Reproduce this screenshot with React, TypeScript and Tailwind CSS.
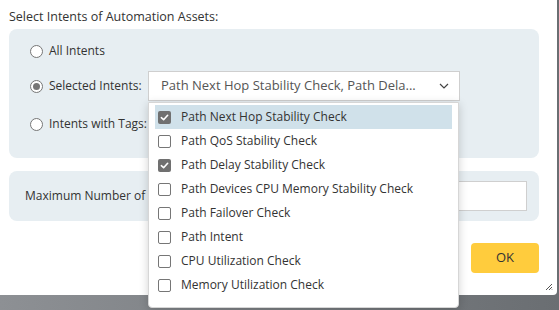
const intents = [
  { label: "Path Next Hop Stability Check", checked: true, active: true },
  { label: "Path QoS Stability Check", checked: false },
  { label: "Path Delay Stability Check", checked: true },
  { label: "Path Devices CPU Memory Stability Check", checked: false },
  { label: "Path Failover Check", checked: false },
  { label: "Path Intent", checked: false },
  { label: "CPU Utilization Check", checked: false },
  { label: "Memory Utilization Check", checked: false },
];

function Radio({ checked = false }: { checked?: boolean }) {
  return (
    <span className="w-[13px] h-[13px] rounded-full border border-[#767676] bg-white flex items-center justify-center shrink-0">
      {checked && <span className="w-[7px] h-[7px] rounded-full bg-[#767676]" />}
    </span>
  );
}

function Checkbox({ checked = false }: { checked?: boolean }) {
  if (checked) {
    return (
      <span className="w-[13px] h-[13px] rounded-[2px] bg-[#707070] flex items-center justify-center shrink-0">
        <svg width="9" height="9" viewBox="0 0 10 10" fill="none">
          <path d="M1.5 5.2 4 7.5 8.5 2.5" stroke="white" strokeWidth="1.8" strokeLinecap="round" strokeLinejoin="round" />
        </svg>
      </span>
    );
  }
  return <span className="w-[13px] h-[13px] rounded-[2px] border border-[#767676] bg-white shrink-0" />;
}

export default function App() {
  return (
    <div className="w-[559px] h-[310px] bg-gradient-to-r from-[#8d9094] to-[#6a6e72] overflow-hidden relative text-[#333] font-['Open_Sans',sans-serif]">
      <div className="w-[557px] h-[295px] bg-white rounded-br-[4px] pl-[9px] pr-[18px] pt-[8px] relative">
        <div className="text-[12.5px] h-[18px] leading-[18px]">Select Intents of Automation Assets:</div>

        <div className="mt-[3px] h-[129px] rounded-[8px] bg-[#e7eef2] pl-[21px] pt-[12px] text-[12px]">
          <div className="h-[20px] flex items-center gap-[6px]">
            <Radio />
            <span>All Intents</span>
          </div>
          <div className="mt-[10px] h-[30px] flex items-center">
            <div className="w-[118px] flex items-center gap-[6px]">
              <Radio checked />
              <span>Selected Intents:</span>
            </div>
            <div className="relative">
              <div className="w-[312px] h-[30px] border border-[#cfcfcf] bg-white flex items-center justify-between pl-[12px] pr-[10px] text-[#555]">
                <span className="text-[13px]">Path Next Hop Stability Check, Path Dela...</span>
                <svg width="10" height="6" viewBox="0 0 10 6" fill="none">
                  <path d="M1 1l4 4 4-4" stroke="#444" strokeWidth="1.2" />
                </svg>
              </div>
              <div className="absolute left-0 top-[31px] z-10 w-[311px] bg-white border border-[#d6d6d6] rounded-b-[4px] shadow-[0_2px_10px_rgba(0,0,0,0.18)] px-[6px] pt-[2px] pb-[10px]">
                {intents.map((it) => (
                  <div
                    key={it.label}
                    className={`h-[24px] flex items-center gap-[10px] pl-[3px] ${it.active ? "bg-[#d0e1ea]" : ""}`}
                  >
                    <Checkbox checked={it.checked} />
                    <span className="text-[12px] text-[#333]">{it.label}</span>
                  </div>
                ))}
              </div>
            </div>
          </div>
          <div className="mt-[13px] h-[20px] flex items-center gap-[6px]">
            <Radio />
            <span>Intents with Tags:</span>
          </div>
        </div>

        <div className="mt-[13px] h-[50px] rounded-[8px] bg-[#e7eef2] pl-[16px] pr-[12px] flex items-center justify-between text-[12px]">
          <span>Maximum Number of</span>
          <div className="w-[130px] h-[30px] border border-[#cfcfcf] bg-white" />
        </div>

        <div className="mt-[22px] flex justify-end">
          <button className="w-[68px] h-[30px] rounded-[4px] bg-[#ffcc3d] text-[13px] text-[#333]">OK</button>
        </div>

        <svg className="absolute right-[4px] bottom-[4px]" width="8" height="8" viewBox="0 0 8 8">
          <path d="M7 1 1 7M7 4 4 7M7 6.5 6.5 7" stroke="#555" strokeWidth="1" />
        </svg>
      </div>
    </div>
  );
}
